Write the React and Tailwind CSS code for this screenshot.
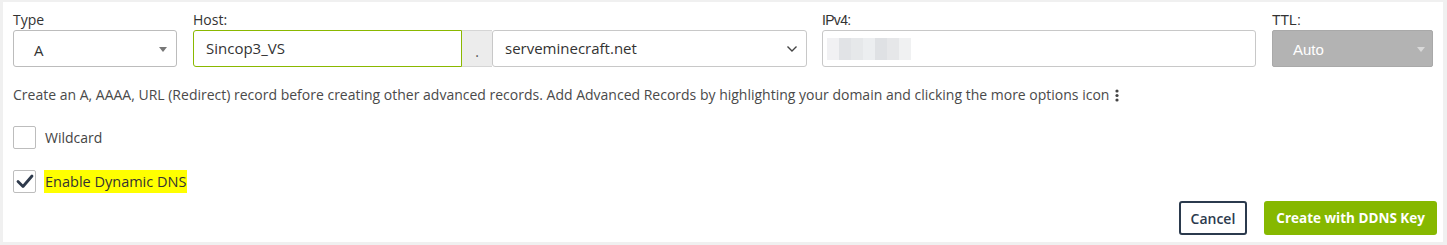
import React from 'react';

const font = { fontFamily: '"Open Sans", "Liberation Sans", sans-serif' };

const DnsRecordForm = () => {
  return (
    <div className="w-[1447px] h-[245px] bg-[#f0f0f0] pt-[2px] pl-[3px] pr-[4px] pb-[3px]" style={font}>
      <div className="h-full bg-white pt-[8px] pl-[10px] pr-[6px] text-[14px] text-[#333]">
        {/* Row of fields */}
        <div className="flex items-start">
          <div className="w-[164px]">
            <div className="h-[20px] leading-[20px]">Type</div>
            <div className="relative h-[37px] border border-[#bcbcbc] rounded-[3px] flex items-center pl-[20px]">
              <span className="text-[15px] mt-[4px]">A</span>
              <span className="absolute right-[9px] top-[16px] w-0 h-0 border-l-[4px] border-r-[4px] border-t-[5px] border-l-transparent border-r-transparent border-t-[#777]" />
            </div>
          </div>

          <div className="ml-[16px] w-[614px]">
            <div className="h-[20px] leading-[20px]">Host:</div>
            <div className="flex h-[37px]">
              <div className="w-[269px] border border-[#8ab800] rounded-l-[3px] flex items-center pl-[12px] text-[15px]">
                Sincop3_VS
              </div>
              <div className="w-[30px] bg-[#ececec] border-y border-[#d5d5d5] flex items-center justify-center text-[#555] pt-[6px]">
                .
              </div>
              <div className="flex-1 border border-[#c8c8c8] rounded-[3px] flex items-center justify-between pl-[12px] pr-[8px] text-[15px]">
                <span>serveminecraft.net</span>
                <svg width="12" height="8" viewBox="0 0 12 8" fill="none">
                  <path d="M1.5 1.5 L6 6 L10.5 1.5" stroke="#444" strokeWidth="1.4" />
                </svg>
              </div>
            </div>
          </div>

          <div className="ml-[15px] w-[434px]">
            <div className="h-[20px] leading-[20px] text-[14px] tracking-tighter" style={{ fontFamily: '"Liberation Sans", sans-serif' }}>IPv4:</div>
            <div className="h-[37px] border border-[#c8c8c8] rounded-[3px] flex items-center pl-[4px]">
              <div className="flex h-[22px]">
                <div className="w-[12px] bg-[#f1f1f3]" />
                <div className="w-[12px] bg-[#e1e3e6]" />
                <div className="w-[12px] bg-[#e6e8ea]" />
                <div className="w-[12px] bg-[#eceef0]" />
                <div className="w-[12px] bg-[#dfe1e4]" />
                <div className="w-[12px] bg-[#e6e7e9]" />
                <div className="w-[12px] bg-[#f0f1f2]" />
              </div>
            </div>
          </div>

          <div className="ml-[16px] w-[161px]">
            <div className="h-[20px] leading-[20px]" style={{ fontFamily: '"Liberation Sans", sans-serif' }}>TTL:</div>
            <div className="relative h-[37px] bg-[#b3b3b3] border border-[#a9a9a9] rounded-[2px] flex items-center pl-[20px] text-white text-[15px]" style={{ fontFamily: '"Liberation Sans", sans-serif' }}>
              <span className="mt-[4px]">Auto</span>
              <span className="absolute right-[7px] top-[16px] w-0 h-0 border-l-[4px] border-r-[4px] border-t-[5px] border-l-transparent border-r-transparent border-t-[#d9d9d9]" />
            </div>
          </div>
        </div>

        {/* Description */}
        <div className="mt-[18px] h-[20px] leading-[20px] flex items-center text-[#4a4a4a]">
          <span>Create an A, AAAA, URL (Redirect) record before creating other advanced records. Add Advanced Records by highlighting your domain and clicking the more options icon</span>
          <svg className="ml-[6px]" width="4" height="13" viewBox="0 0 4 13">
            <circle cx="2" cy="2" r="1.6" fill="#444" />
            <circle cx="2" cy="6.5" r="1.6" fill="#444" />
            <circle cx="2" cy="11" r="1.6" fill="#444" />
          </svg>
        </div>

        {/* Wildcard */}
        <div className="mt-[21px] flex items-center h-[23px]">
          <div className="w-[23px] h-[23px] border border-[#bdbdbd] rounded-[2px] bg-white" />
          <span className="ml-[9px] text-[#444]">Wildcard</span>
        </div>

        {/* Dynamic DNS */}
        <div className="mt-[21px] flex items-center h-[23px]">
          <div className="w-[23px] h-[23px] border border-[#bdbdbd] rounded-[2px] bg-white flex items-center justify-center">
            <svg width="18" height="15" viewBox="0 0 18 15" fill="none">
              <path d="M2 7.5 L7 12.5 L16 2" stroke="#2e3a4c" strokeWidth="2.8" strokeLinecap="round" strokeLinejoin="round" />
            </svg>
          </div>
          <span className="ml-[8px] bg-[#ffff00] px-[1px] h-[23px] leading-[23px] text-[14.5px] text-[#333]">Enable Dynamic DNS</span>
        </div>

        {/* Actions */}
        <div className="mt-[8px] flex justify-end gap-[17px]">
          <button className="h-[34px] px-[10px] border-2 border-[#2b3a4d] rounded-[3px] text-[#2b3a4d] font-semibold text-[14px] bg-white">
            Cancel
          </button>
          <button className="h-[34px] px-[12px] bg-[#86b800] rounded-[3px] text-white font-bold text-[13.5px]">
            Create with DDNS Key
          </button>
        </div>
      </div>
    </div>
  );
};

export default DnsRecordForm;
